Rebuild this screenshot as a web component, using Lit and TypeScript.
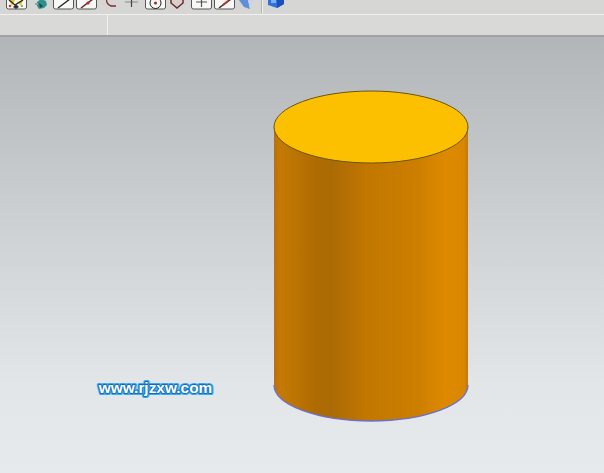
import { LitElement, html, css, svg } from "lit";
import { customElement } from "lit/decorators.js";

const btn = (inner: unknown) => html`<span class="tb"><svg width="21" height="14" viewBox="0 0 21 14">
  <rect x=".5" y="-6" width="20" height="15" rx="2" fill="#f8f8f7" stroke="#565656"/>${inner}</svg></span>`;

@customElement("app-root")
export class AppRoot extends LitElement {
  static styles = css`
    :host { display: block; width: 604px; height: 473px; overflow: hidden; background: #e6e9ec; }
    .toolbar { height: 14px; background: #d6d6d5; border-bottom: 1px solid #f0f0ef; display: flex; align-items: flex-start; padding-left: 6px; overflow: hidden; }
    .toolbar svg { display: block; }
    .tb { display: block; flex: none; }
    .g8 { margin-left: 8px; } .g5 { margin-left: 5px; } .g2 { margin-left: 2px; } .g9 { margin-left: 9px; } .g6 { margin-left: 6px; } .g4 { margin-left: 4px; }
    .sep { width: 1px; height: 13px; background: #b5b5b5; border-right: 1px solid #efefef; margin-left: 7px; margin-right: 4px; flex: none; }
    .tabs { height: 20px; background: #d9d9d8; display: flex; border-bottom: 2px solid #9fa3a5; }
    .tab { width: 107px; flex: none; border-right: 1px solid #f1f1f1; }
    .view { display: block; width: 604px; height: 436px; }
    .wm { font: bold 15.4px "Liberation Sans", sans-serif; }
  `;

  render() {
    return html`
      <div class="toolbar">
        ${btn(svg`<path d="M3 0h6l-3 6zM11 2l6-2-2 6z" fill="#e6c62a"/><path d="M3 0 9 5 17 0" fill="none" stroke="#222" stroke-width="1.300"/><path d="M7 7l3-3 3 3-3 2z" fill="#333"/><circle cx="4" cy="6" r="1.300" fill="#c33"/><circle cx="16" cy="6" r="1" fill="#3a7"/>`)}
        <span class="tb g8"><svg width="13" height="14" viewBox="0 0 13 14"><path d="M2 2 6-1 11 1l1 4-3 3-5 1-2-3z" fill="#2f8f8c"/><path d="M4 3l4 3-3 2z" fill="#14494b"/><path d="M0 3h3v2H0z" fill="#8a9"/></svg></span>
        <span class="g5">${btn(svg`<path d="M5 8 L17 -1" stroke="#222" stroke-width="1.300"/>`)}</span>
        <span class="g2">${btn(svg`<path d="M5 8 L17 -1" stroke="#5a2a30" stroke-width="1.500"/><circle cx="12" cy="3" r="1.600" fill="#c22"/>`)}</span>
        <span class="tb g9"><svg width="14" height="14" viewBox="0 0 14 14"><path d="M11-3A7 7 0 0 0 1-2a6 6 0 0 0 4 8h5" fill="none" stroke="#7c2b32" stroke-width="1.300"/></svg></span>
        <span class="tb g5"><svg width="14" height="14" viewBox="0 0 14 14"><path d="M0 2h13" stroke="#8a8a8a"/><path d="M6.500 0v7" stroke="#444" stroke-width="1.200"/></svg></span>
        <span class="g6">${btn(svg`<circle cx="10.500" cy="3" r="5.500" fill="none" stroke="#222"/><circle cx="10.500" cy="3" r="1.500" fill="#a22"/>`)}</span>
        <span class="tb g2"><svg width="18" height="14" viewBox="0 0 18 14"><path d="M3-2V3L9 8 15 3V-2" fill="#d8d0cc" stroke="#6f2a30" stroke-width="1.500"/></svg></span>
        <span class="g5">${btn(svg`<path d="M10.500-2v9M5 2h11" stroke="#555" stroke-width="1.200"/>`)}</span>
        <span class="g2">${btn(svg`<path d="M5 8 L17 -1" stroke="#333" stroke-width="1.500"/><path d="M9 5 14 1" stroke="#c23028" stroke-width="2"/>`)}</span>
        <span class="tb g4"><svg width="15" height="14" viewBox="0 0 15 14"><path d="M0 0H9L11 9 5 7z" fill="#5f8fd6"/><path d="M9 0h5L11 9z" fill="#c9d4e6"/></svg></span>
        <span class="sep"></span>
        <span class="tb"><svg width="18" height="14" viewBox="0 0 18 14"><path d="M1 0H17V4L10 8 1 5z" fill="#2f6fe0"/><path d="M10 0h7V4L10 8z" fill="#1c4fb8"/><path d="M4 0H9V3H4z" fill="#7fb0f2"/></svg></span>
      </div>
      <div class="tabs"><div class="tab"></div></div>
      <svg class="view" viewBox="0 37 604 436">
        <defs>
          <linearGradient id="bg" x1="0" y1="37" x2="0" y2="473" gradientUnits="userSpaceOnUse">
            <stop offset="0" stop-color="#b2b6b8"/><stop offset=".5" stop-color="#d2d5d8"/><stop offset=".8" stop-color="#e3e6e9"/><stop offset="1" stop-color="#e7eaed"/>
          </linearGradient>
          <linearGradient id="body" x1="274" y1="0" x2="468" y2="0" gradientUnits="userSpaceOnUse">
            <stop offset="0" stop-color="#b8700c"/><stop offset=".03" stop-color="#c47a04"/><stop offset=".12" stop-color="#bb7302"/><stop offset=".22" stop-color="#ae6b02"/><stop offset=".3" stop-color="#ab6b04"/>
            <stop offset=".48" stop-color="#c27700"/><stop offset=".74" stop-color="#cc7e00"/><stop offset=".88" stop-color="#de8a00"/><stop offset=".98" stop-color="#da8600"/><stop offset="1" stop-color="#c07a10"/>
          </linearGradient>
        </defs>
        <rect x="0" y="37" width="604" height="436" fill="url(#bg)"/>
        <path d="M274 127V385A97 36 0 0 0 468 385V127Z" fill="url(#body)"/>
        <path d="M274 385A97 36 0 0 0 468 385" fill="none" stroke="#6a6fd0" stroke-width="1.300"/>
        <ellipse cx="371" cy="127" rx="97" ry="36" fill="#fdc000" stroke="#6a5412" stroke-width="1"/>
        <g class="wm">
          <text x="155.500" y="392.500" text-anchor="middle" fill="#39a9ee" stroke="#39a9ee" stroke-width="4.200" stroke-linejoin="round">www.rjzxw.com</text>
          <text x="155.500" y="392.500" text-anchor="middle" fill="#fff" stroke="#0f6cb8" stroke-width="1.800" stroke-linejoin="round" paint-order="stroke">www.rjzxw.com</text>
        </g>
      </svg>
    `;
  }
}
